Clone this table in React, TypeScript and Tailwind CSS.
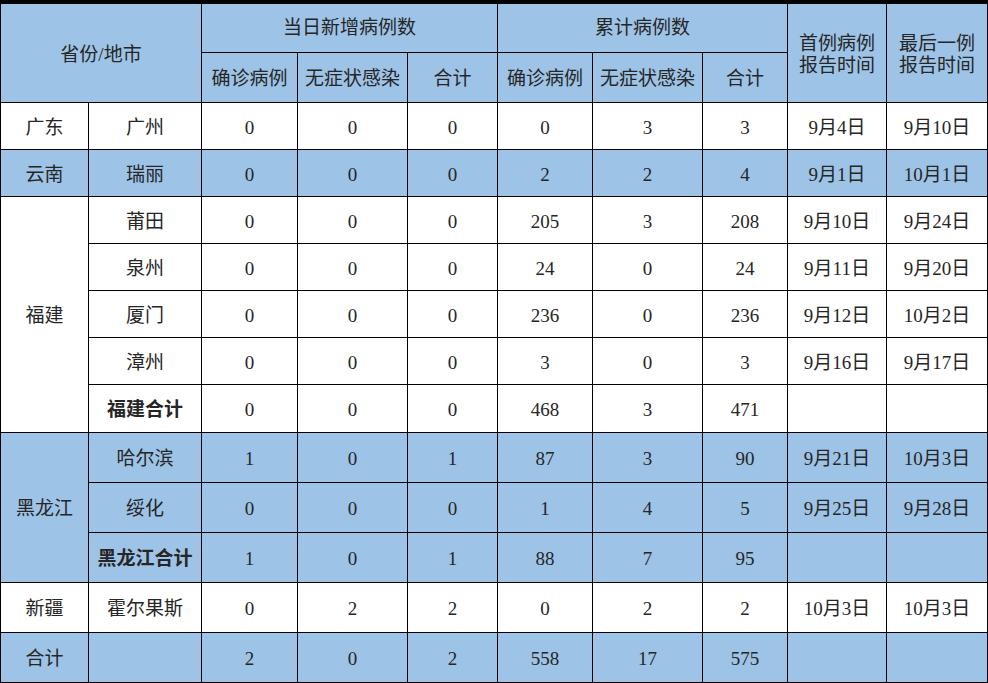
const BLUE = "bg-[#9dc3e6]";

type Row = {
  city: string;
  bold?: boolean;
  cells: (string | number)[];
  first: string;
  last: string;
  h: string;
};

type Group = {
  province: string;
  bg: string;
  rows: Row[];
};

const groups: Group[] = [
  {
    province: "广东",
    bg: "bg-white",
    rows: [{ city: "广州", cells: [0, 0, 0, 0, 3, 3], first: "9月4日", last: "9月10日", h: "h-[47px]" }],
  },
  {
    province: "云南",
    bg: BLUE,
    rows: [{ city: "瑞丽", cells: [0, 0, 0, 2, 2, 4], first: "9月1日", last: "10月1日", h: "h-[47px]" }],
  },
  {
    province: "福建",
    bg: "bg-white",
    rows: [
      { city: "莆田", cells: [0, 0, 0, 205, 3, 208], first: "9月10日", last: "9月24日", h: "h-[47px]" },
      { city: "泉州", cells: [0, 0, 0, 24, 0, 24], first: "9月11日", last: "9月20日", h: "h-[47px]" },
      { city: "厦门", cells: [0, 0, 0, 236, 0, 236], first: "9月12日", last: "10月2日", h: "h-[47px]" },
      { city: "漳州", cells: [0, 0, 0, 3, 0, 3], first: "9月16日", last: "9月17日", h: "h-[47px]" },
      { city: "福建合计", bold: true, cells: [0, 0, 0, 468, 3, 471], first: "", last: "", h: "h-[48px]" },
    ],
  },
  {
    province: "黑龙江",
    bg: BLUE,
    rows: [
      { city: "哈尔滨", cells: [1, 0, 1, 87, 3, 90], first: "9月21日", last: "10月3日", h: "h-[50px]" },
      { city: "绥化", cells: [0, 0, 0, 1, 4, 5], first: "9月25日", last: "9月28日", h: "h-[50px]" },
      { city: "黑龙江合计", bold: true, cells: [1, 0, 1, 88, 7, 95], first: "", last: "", h: "h-[50px]" },
    ],
  },
  {
    province: "新疆",
    bg: "bg-white",
    rows: [{ city: "霍尔果斯", cells: [0, 2, 2, 0, 2, 2], first: "10月3日", last: "10月3日", h: "h-[50px]" }],
  },
  {
    province: "合计",
    bg: BLUE,
    rows: [{ city: "", cells: [2, 0, 2, 558, 17, 575], first: "", last: "", h: "h-[50px]" }],
  },
];

const cell = "border border-black text-center align-middle p-0";
const body = `${cell} pt-[4px]`;

export default function App() {
  return (
    <div className="w-[988px] h-[683px] bg-white overflow-hidden">
      <table
        className="table-fixed border-collapse w-[987px] border-t-4 border-t-black text-[19px] leading-[22px] text-[#262626]"
        style={{ fontFamily: '"Liberation Serif", "Noto Sans CJK SC", serif' }}
      >
        <colgroup>
          <col className="w-[88px]" />
          <col className="w-[113px]" />
          <col className="w-[96px]" />
          <col className="w-[110px]" />
          <col className="w-[90px]" />
          <col className="w-[95px]" />
          <col className="w-[110px]" />
          <col className="w-[85px]" />
          <col className="w-[99px]" />
          <col className="w-[101px]" />
        </colgroup>
        <thead className={BLUE}>
          <tr className="h-[50px]">
            <th colSpan={2} rowSpan={2} className={`${cell} font-normal pt-[4px]`}>
              省份/地市
            </th>
            <th colSpan={3} className={`${cell} font-normal`}>
              当日新增病例数
            </th>
            <th colSpan={3} className={`${cell} font-normal`}>
              累计病例数
            </th>
            <th rowSpan={2} className={`${cell} font-normal pt-[4px]`}>
              首例病例
              <br />
              报告时间
            </th>
            <th rowSpan={2} className={`${cell} font-normal pt-[4px]`}>
              最后一例
              <br />
              报告时间
            </th>
          </tr>
          <tr className="h-[50px]">
            {["确诊病例", "无症状感染", "合计", "确诊病例", "无症状感染", "合计"].map((t, i) => (
              <th key={i} className={`${cell} font-normal whitespace-nowrap pt-[4px]`}>
                {t}
              </th>
            ))}
          </tr>
        </thead>
        <tbody>
          {groups.map((g) =>
            g.rows.map((r, i) => (
              <tr key={g.province + r.city} className={`${g.bg} ${r.h}`}>
                {i === 0 ? (
                  <td rowSpan={g.rows.length} className={body}>
                    {g.province}
                  </td>
                ) : null}
                <td className={`${body} whitespace-nowrap ${r.bold ? "font-bold" : ""}`}>{r.city}</td>
                {r.cells.map((v, j) => (
                  <td key={j} className={body}>
                    {v}
                  </td>
                ))}
                <td className={`${body} whitespace-nowrap`}>{r.first}</td>
                <td className={`${body} whitespace-nowrap`}>{r.last}</td>
              </tr>
            )),
          )}
        </tbody>
      </table>
    </div>
  );
}
